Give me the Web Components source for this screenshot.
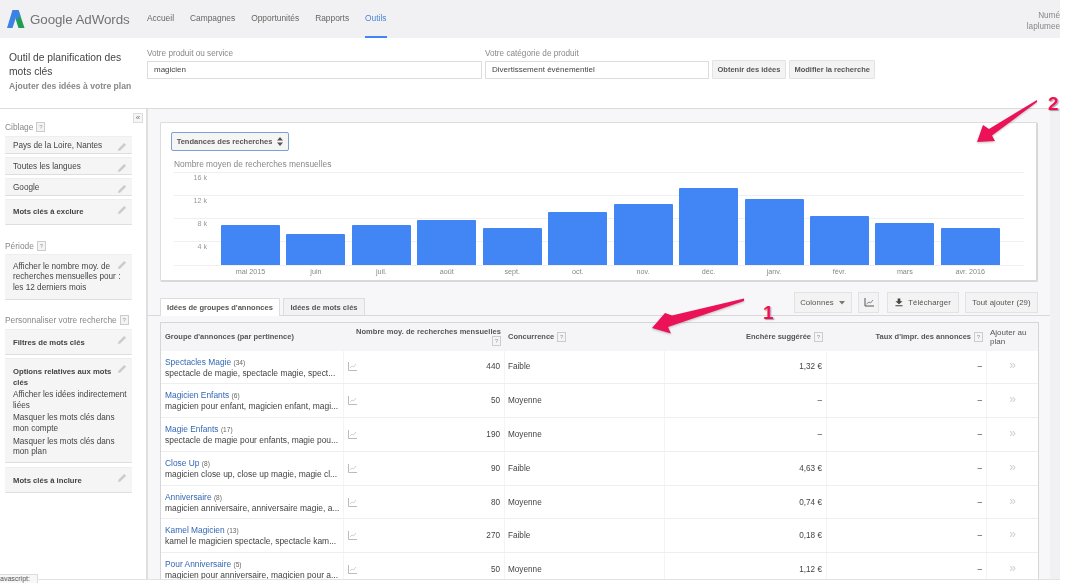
<!DOCTYPE html>
<html lang="fr">
<head>
<meta charset="utf-8">
<title>Google AdWords</title>
<style>
html,body{margin:0;padding:0;background:#fff;}
body{font-family:"Liberation Sans",Arial,sans-serif;color:#333;width:1072px;height:583px;overflow:hidden;position:relative;}
ad-shell{filter:blur(.35px);}
</style>
</head>
<body>
<ad-shell>
  <ad-topbar slot="top"></ad-topbar>
  <ad-search slot="search"></ad-search>
  <ad-sidebar slot="side"></ad-sidebar>
  <div slot="main">
    <trend-chart></trend-chart>
    <idea-toolbar></idea-toolbar>
    <idea-table></idea-table>
  </div>
</ad-shell>
<status-tip>avascript:</status-tip>
<note-arrow style="left:645px;top:296px" data-w="104" data-h="38" data-path="M99 2.5 L27 19.5 L20 17 L7 32 L26 37.5 L23 31 L99 5 Z" data-num="1" data-nx="118" data-ny="7"></note-arrow>
<note-arrow style="left:972px;top:96px" data-w="70" data-h="50" data-path="M65 4 L17 33 L11 29 L5 46 L23 45 L20 39.5 L65 6 Z" data-num="2" data-nx="76" data-ny="-2"></note-arrow>
<script>
const help=`<span class="q">?</span>`
const helpCss=`.q{display:inline-block;width:7px;height:8px;line-height:8px;border:1px solid #ccc;background:#f4f4f4;color:#999;font-size:6px;font-weight:400;text-align:center;margin-left:3px;vertical-align:1px;}`

class AdShell extends HTMLElement{
    constructor(){
        super();
        this.attachShadow({mode:'open'});
        this.shadowRoot.innerHTML=`
        <style>
        :host{display:block;width:1060px;height:580px;overflow:hidden;background:#fff;}
        .body{display:flex;height:472px;box-sizing:border-box;border-top:1px solid #dcdcdc;border-bottom:1px solid #e2e2e2;}
        .side{width:146px;flex:none;border-right:2px solid #dedede;}
        .main{flex:1;background:#f7f7f9;padding:13px 0 0 12px;border-right:10px solid #f1f1f4;overflow:hidden;}
        </style>
        <slot name="top"></slot>
        <slot name="search"></slot>
        <div class="body">
          <div class="side"><slot name="side"></slot></div>
          <div class="main"><slot name="main"></slot></div>
        </div>`;
    }
}

class AdTopbar extends HTMLElement{
    constructor(){
        super();
        this.attachShadow({mode:'open'});
        this.shadowRoot.innerHTML=`
        <style>
        :host{display:flex;align-items:stretch;height:38px;background:#f1f1f3;position:relative;}
        .logo{display:flex;align-items:center;width:147px;flex:none;padding-left:6px;box-sizing:border-box;gap:5px;}
        .brand{font-size:13.4px;color:#737373;letter-spacing:-.1px;white-space:nowrap;}
        nav{display:flex;gap:16px;}
        nav a{display:block;font-size:8.4px;color:#666;padding-top:13px;height:24px;box-sizing:border-box;}
        nav a.on{color:#4a84d8;border-bottom:2px solid #4285f4;height:38px;width:22px;}
        .user{position:absolute;right:0;top:10px;text-align:right;font-size:8.2px;line-height:11px;color:#888;white-space:nowrap;}
        </style>
        <div class="logo">
          <svg width="19" height="20" viewBox="0 0 19 20"><path d="M6.5 1H12.5L6.5 19H1Z" fill="#3b82e6"/><path d="M12.5 1L18.5 19H12.5L9.6 10Z" fill="#1f9d55"/><path d="M6.5 1H12.5L14.5 7L11 11L9 5Z" fill="#3b82e6"/></svg>
          <span class="brand">Google AdWords</span>
        </div>
        <nav><a>Accueil</a><a>Campagnes</a><a>Opportunités</a><a>Rapports</a><a class="on">Outils</a></nav>
        <div class="user"><div>Numé</div><div>laplumee</div></div>`;
    }
}

class AdSearch extends HTMLElement{
    constructor(){
        super();
        this.attachShadow({mode:'open'});
        this.shadowRoot.innerHTML=`
        <style>
        :host{display:flex;height:70px;background:#fff;box-sizing:border-box;}
        .title{width:147px;flex:none;padding:13px 18px 0 9px;box-sizing:border-box;}
        .title b{display:block;font-weight:400;font-size:10.3px;line-height:13.5px;color:#444;}
        .title span{display:block;font-size:8.6px;color:#888;margin-top:3px;white-space:nowrap;font-weight:700;}
        label{display:block;font-size:8.2px;color:#888;margin-top:11px;height:12px;}
        .box{height:18px;border:1px solid #ddd;box-sizing:border-box;font-size:8px;line-height:16px;padding-left:6px;color:#444;}
        .f1{width:335px;margin-right:3px;}
        .f2{width:224px;margin-right:3px;}
        button{font:700 7.5px "Liberation Sans",Arial,sans-serif;color:#555;background:#f3f3f3;border:1px solid #e3e3e3;height:19px;padding:0 4.5px;margin:22px 3px 0 0;white-space:nowrap;border-radius:1px;}
        </style>
        <div class="title"><b>Outil de planification des mots clés</b><span>Ajouter des idées à votre plan</span></div>
        <div class="f1"><label>Votre produit ou service</label><div class="box">magicien</div></div>
        <div class="f2"><label>Votre catégorie de produit</label><div class="box">Divertissement événementiel</div></div>
        <button>Obtenir des idées</button><button>Modifier la recherche</button>`;
    }
}

class SideCard extends HTMLElement{
    constructor(){
        super();
        this.attachShadow({mode:'open'});
        this.shadowRoot.innerHTML=`
        <style>
        :host{display:block;position:relative;height:18px;background:#f5f5f6;border-bottom:1px solid #dedede;border-top:1px solid #eee;margin:0 0 3.3px 5px;width:127px;box-sizing:border-box;padding:4px 6px 0 8px;font-size:8.2px;line-height:10.3px;color:#444;border-radius:1px;}
        :host([bold]){font-weight:700;font-size:7.7px;}
        svg{position:absolute;right:5px;top:5px;}
        </style>
        <slot></slot>
        <svg width="10" height="10" viewBox="0 0 9 9"><path d="M6.5 .8L8.2 2.5 3 7.7.8 8.2 1.3 6Z" fill="#ccc"/></svg>`;
    }
}

class AdSidebar extends HTMLElement{
    constructor(){
        super();
        this.attachShadow({mode:'open'});
        this.shadowRoot.innerHTML=`
        <style>
        :host{display:block;position:relative;padding-top:13px;}
        h4{margin:0 0 2.5px 5px;font-weight:400;font-size:8.4px;line-height:11px;color:#888;}
        ${helpCss}
        .fold{position:absolute;right:3px;top:4px;width:8px;height:8px;line-height:7px;border:1px solid #ddd;font-size:8px;text-align:center;color:#777;background:#f5f5f5;}
        .sp{height:12px;}
        p{margin:0 0 2.5px;font-weight:400;}
        b{font-size:7.7px;display:block;padding-right:8px;}
        </style>
        <div class="fold">«</div>
        <h4>Ciblage${help}</h4>
        <side-card>Pays de la Loire, Nantes</side-card>
        <side-card>Toutes les langues</side-card>
        <side-card>Google</side-card>
        <side-card bold style="height:26px;padding-top:7px">Mots clés à exclure</side-card>
        <div class="sp"></div>
        <h4>Période${help}</h4>
        <side-card style="height:46px;padding-top:7px">Afficher le nombre moy. de recherches mensuelles pour :<br>les 12 derniers mois</side-card>
        <div class="sp"></div>
        <h4>Personnaliser votre recherche${help}</h4>
        <side-card bold style="height:26px;padding-top:8px">Filtres de mots clés</side-card>
        <side-card style="height:105px;padding:8px 0 0 8px"><b>Options relatives aux mots clés</b><p style="margin-top:2.5px;white-space:nowrap">Afficher les idées indirectement<br>liées</p><p>Masquer les mots clés dans<br>mon compte</p><p>Masquer les mots clés dans<br>mon plan</p></side-card>
        <side-card bold style="height:26px;padding-top:8px">Mots clés à inclure</side-card>`;
    }
}

class TrendChart extends HTMLElement{
    connectedCallback(){
        const months=[['mai 2015',40],['juin',31.5],['juil.',40],['août',45],['sept.',37],['oct.',53],['nov.',61],['déc.',77],['janv.',66],['févr.',49],['mars',42],['avr. 2016',37]];
        const root=this.attachShadow({mode:'open'});
        root.innerHTML=`
        <style>
        :host{display:block;width:878px;height:160px;box-sizing:border-box;background:#fff;border:1px solid #ddd;border-bottom:2px solid #d8d8d8;border-right:2px solid #d8d8d8;border-radius:2px;padding:9px 12px 0 10px;}
        .sel{display:flex;justify-content:center;align-items:center;gap:5px;width:118px;height:19px;box-sizing:border-box;border:1px solid #7aa0d6;border-radius:2px;background:#f5f5f5;font-weight:700;font-size:7.5px;color:#555;white-space:nowrap;}
        .cap{font-size:8.4px;color:#888;margin:8px 0 0 3px;height:13px;line-height:10px;}
        .plot{display:grid;margin-left:3px;height:93px;width:850px;border-bottom:1px solid #f0f0f0;}
        .grid,.bars{grid-area:1/1;}
        .grid div{height:23px;box-sizing:border-box;border-top:1px solid #f0f0f0;font-size:7.2px;line-height:9px;color:#999;width:100%;}
        .grid span{display:block;width:33px;text-align:right;}
        .bars{display:flex;gap:6.45px;padding-left:47px;align-items:flex-end;}
        .bars div{width:59px;background:#4285f4;border-radius:1px 1px 0 0;flex:none;}
        .x{display:flex;gap:6.45px;padding-left:50px;font-size:7.2px;color:#888;margin-top:1px;}
        .x span{width:59px;flex:none;text-align:center;}
        </style>
        <div class="sel">Tendances des recherches <svg width="6" height="9" viewBox="0 0 6 9"><path d="M3 0L6 3.5H0ZM3 9L0 5.5H6Z" fill="#555"/></svg></div>
        <div class="cap">Nombre moyen de recherches mensuelles</div>
        <div class="plot">
          <div class="grid"><div><span>16 k</span></div><div><span>12 k</span></div><div><span>8 k</span></div><div><span>4 k</span></div></div>
          <div class="bars">${months.map(m=>`<div style="height:${m[1]}px"></div>`).join('')}</div>
        </div>
        <div class="x">${months.map(m=>`<span>${m[0]}</span>`).join('')}</div>`;
    }
}

class IdeaToolbar extends HTMLElement{
    constructor(){
        super();
        this.attachShadow({mode:'open'});
        this.shadowRoot.innerHTML=`
        <style>
        :host{display:flex;align-items:flex-end;height:34px;margin:0 0 6px -12px;padding-left:12px;border-bottom:1px solid #d9d9d9;width:902px;box-sizing:border-box;}
        .tab{height:17px;box-sizing:border-box;font-weight:700;font-size:7.55px;line-height:17px;color:#555;text-align:center;border:1px solid #ddd;border-bottom:0;background:#f2f2f4;margin-right:3px;white-space:nowrap;}
        .tab.on{background:#fff;height:18px;margin-bottom:-1px;}
        .r{margin-left:auto;display:flex;margin-right:12px;margin-bottom:2px;}
        .b{height:21px;box-sizing:border-box;border:1px solid #e2e2e2;background:#f3f3f3;font-size:7.8px;display:flex;justify-content:center;align-items:center;gap:5px;color:#555;white-space:nowrap;letter-spacing:.1px;}
        </style>
        <div class="tab on" style="width:120px">Idées de groupes d'annonces</div>
        <div class="tab" style="width:82px">Idées de mots clés</div>
        <div class="r">
          <div class="b" style="width:58px;margin-right:6.5px">Colonnes <svg width="6" height="4" viewBox="0 0 6 4"><path d="M0 0H6L3 3.5Z" fill="#777"/></svg></div>
          <div class="b" style="width:21px;margin-right:8px"><svg width="10" height="9" viewBox="0 0 10 9" fill="none" stroke="#555"><path d="M1 0V8H10"/><path d="M2.5 6L5 4L6.5 5L9 2" stroke-width=".7"/></svg></div>
          <div class="b" style="width:72px;margin-right:6px"><svg width="8" height="9" viewBox="0 0 9 9"><path d="M3 0H6V3H8.5L4.5 6.5.5 3H3ZM.5 7.5H8.5V8.7H.5Z" fill="#444"/></svg>Télécharger</div>
          <div class="b" style="width:73px">Tout ajouter (29)</div>
        </div>`;
    }
}

class IdeaRow extends HTMLElement{
    connectedCallback(){
        const d=this.dataset;
        const root=this.attachShadow({mode:'open'});
        root.innerHTML=`
        <style>
        :host{display:grid;grid-template-columns:183px 161px 160px 162px 160px 1fr;height:33.8px;box-sizing:border-box;border-bottom:1px solid #eee;font-size:8.2px;color:#444;}
        :host>div{border-right:1px solid #f4f4f4;display:flex;align-items:center;padding:0 4px;box-sizing:border-box;justify-content:flex-end;}
        .g{display:block!important;padding:6px 0 0 4px!important;line-height:11px;white-space:nowrap;overflow:hidden;font-size:8.45px;}
        a{color:#3367b5;font-size:8.4px;}
        small{font-size:6.6px;color:#666;}
        .c2{justify-content:space-between!important;}
        .c3{justify-content:flex-start!important;padding-left:3px!important;}
        .add{justify-content:center!important;color:#d0d0d0;font-size:12px;border-right:0!important;padding-bottom:3px!important;}
        </style>
        <div class="g"><a>${d.name}</a> <small>(${d.n})</small><br>${d.words}</div>
        <div class="c2"><svg width="9" height="9" viewBox="0 0 9 9" fill="none" stroke="#bbb"><path d="M.5 0V8.5H9"/><path d="M2 6L4 4L5.5 5L8 2" stroke-width=".7"/></svg><span>${d.vol}</span></div>
        <div class="c3">${d.comp}</div>
        <div>${d.bid}</div>
        <div>–</div>
        <div class="add">»</div>`;
    }
}

class IdeaTable extends HTMLElement{
    constructor(){
        super();
        this.attachShadow({mode:'open'});
        this.shadowRoot.innerHTML=`
        <style>
        :host{display:block;width:879px;box-sizing:border-box;background:#fff;border:1px solid #d6d6d6;border-bottom:0;}
        ${helpCss}
        .h{display:grid;grid-template-columns:183px 161px 160px 162px 160px 1fr;height:27.5px;background:#f5f5f7;font-weight:700;font-size:7.5px;line-height:9px;color:#555;}
        .h div{padding:0 4px;display:flex;align-items:center;}
        .h .l{padding-left:3px;}
        .r{justify-content:flex-end;text-align:right;}
        .r2{display:block!important;text-align:right;padding-top:4px!important;white-space:nowrap;letter-spacing:.05px;}
        .p{font-weight:400;font-size:8px;padding-left:3px!important;}
        </style>
        <div class="h">
          <div>Groupe d'annonces (par pertinence)</div>
          <div class="r2">Nombre moy. de recherches mensuelles<br>${help}</div>
          <div class="l">Concurrence${help}</div>
          <div class="r">Enchère suggérée${help}</div>
          <div class="r">Taux d'impr. des annonces${help}</div>
          <div class="p">Ajouter au plan</div>
        </div>
        <idea-row data-name="Spectacles Magie" data-n="34" data-words="spectacle de magie, spectacle magie, spect..." data-vol="440" data-comp="Faible" data-bid="1,32 €"></idea-row>
        <idea-row data-name="Magicien Enfants" data-n="6" data-words="magicien pour enfant, magicien enfant, magi..." data-vol="50" data-comp="Moyenne" data-bid="–"></idea-row>
        <idea-row data-name="Magie Enfants" data-n="17" data-words="spectacle de magie pour enfants, magie pou..." data-vol="190" data-comp="Moyenne" data-bid="–"></idea-row>
        <idea-row data-name="Close Up" data-n="8" data-words="magicien close up, close up magie, magie cl..." data-vol="90" data-comp="Faible" data-bid="4,63 €"></idea-row>
        <idea-row data-name="Anniversaire" data-n="8" data-words="magicien anniversaire, anniversaire magie, a..." data-vol="80" data-comp="Moyenne" data-bid="0,74 €"></idea-row>
        <idea-row data-name="Kamel Magicien" data-n="13" data-words="kamel le magicien spectacle, spectacle kam..." data-vol="270" data-comp="Faible" data-bid="0,18 €"></idea-row>
        <idea-row data-name="Pour Anniversaire" data-n="5" data-words="magicien pour anniversaire, magicien pour a..." data-vol="50" data-comp="Moyenne" data-bid="1,12 €"></idea-row>`;
    }
}

class StatusTip extends HTMLElement{
    constructor(){
        super();
        this.attachShadow({mode:'open'});
        this.shadowRoot.innerHTML=`
        <style>
        :host{position:absolute;left:0;top:574px;display:block;width:37px;height:8px;border:1px solid #ddd;border-left:0;font-size:7px;line-height:8px;color:#555;overflow:hidden;background:#f7f7f7;}
        </style>
        <slot></slot>`;
    }
}

class NoteArrow extends HTMLElement{
    connectedCallback(){
        const d=this.dataset;
        const root=this.attachShadow({mode:'open'});
        root.innerHTML=`
        <style>
        :host{position:absolute;display:block;width:${d.w}px;height:${d.h}px;}
        svg{display:block;overflow:visible;filter:drop-shadow(0 1px 1px rgba(0,0,0,.25));}
        span{position:absolute;left:${d.nx}px;top:${d.ny}px;font:700 19px "Liberation Sans",Arial,sans-serif;line-height:19px;color:#ec1258;text-shadow:0 0 1px #fff,1px 1px 1px rgba(0,0,0,.4);}
        </style>
        <svg width="${d.w}" height="${d.h}"><path d="${d.path}" fill="#ec1258"/></svg>
        <span>${d.num}</span>`;
    }
}

customElements.define('ad-shell',AdShell);
customElements.define('ad-topbar',AdTopbar);
customElements.define('ad-search',AdSearch);
customElements.define('side-card',SideCard);
customElements.define('ad-sidebar',AdSidebar);
customElements.define('trend-chart',TrendChart);
customElements.define('idea-toolbar',IdeaToolbar);
customElements.define('idea-row',IdeaRow);
customElements.define('idea-table',IdeaTable);
customElements.define('status-tip',StatusTip);
customElements.define('note-arrow',NoteArrow);
</script>
</body>
</html>
